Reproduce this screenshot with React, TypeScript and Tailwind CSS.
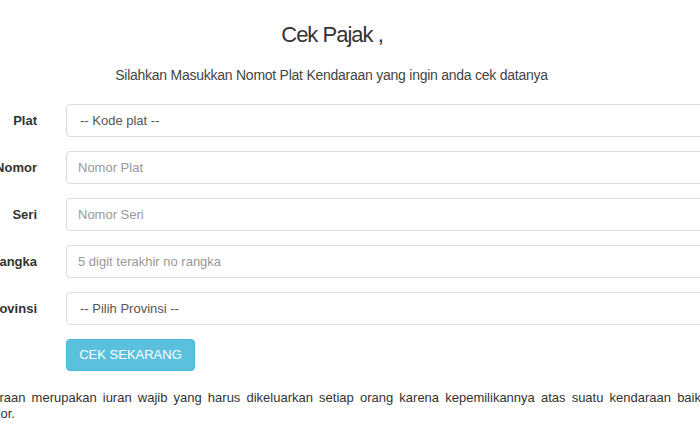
import React from "react";

const rows = [
  { label: "Plat", kind: "select", text: "-- Kode plat --" },
  { label: "Nomor", kind: "input", text: "Nomor Plat" },
  { label: "Seri", kind: "input", text: "Nomor Seri" },
  { label: "Rangka", kind: "input", text: "5 digit terakhir no rangka" },
  { label: "Provinsi", kind: "select", text: "-- Pilih Provinsi --" },
];

export default function App() {
  return (
    <div
      className="w-[700px] h-[423px] overflow-hidden bg-white text-[#333]"
      style={{ fontFamily: '"Liberation Sans", Arial, sans-serif' }}
    >
      <div className="pt-[22px] text-center">
        <h1 className="text-[22px] leading-[26px] tracking-[-1px] text-[#333] mr-[36px]">Cek Pajak ,</h1>
        <p className="mt-[19px] text-[14px] leading-[17px] text-[#444] tracking-[-0.25px] mr-[37px]">
          Silahkan Masukkan Nomot Plat Kendaraan yang ingin anda cek datanya
        </p>
      </div>

      <form className="-ml-[100px] w-[960px] mt-[20px] flex flex-col gap-[14px]">
        {rows.map((r) => (
          <div key={r.label} className="flex items-center">
            <label className="w-[152px] pr-[15px] text-right text-[13px] font-bold text-[#333]">
              {r.label}
            </label>
            <div className="flex-1 pl-[14px]">
              <div className="h-[33px] rounded-[4px] border border-[#dcdcdc] flex items-center">
                {r.kind === "select" ? (
                  <span className="pl-[13px] text-[13px] text-[#555]">{r.text}</span>
                ) : (
                  <span className="pl-[11px] text-[13px] text-[#999]">{r.text}</span>
                )}
              </div>
            </div>
          </div>
        ))}
        <div className="flex">
          <div className="w-[152px]" />
          <div className="pl-[14px]">
            <button
              type="button"
              className="h-[32px] w-[129px] rounded-[4px] bg-[#5bc0de] text-white text-[13px] border border-[#46b8da]"
            >
              CEK SEKARANG
            </button>
          </div>
        </div>
      </form>

      <div className="-ml-[36px] w-[800px] mt-[19px] text-[13px] leading-[16px] text-[#333]">
        <p className="text-justify [text-align-last:justify] w-[737px]">
          kendaraan merupakan iuran wajib yang harus dikeluarkan setiap orang karena kepemilikannya atas suatu kendaraan baik
        </p>
        <p className="-ml-[4px]">bermotor.</p>
      </div>
    </div>
  );
}
